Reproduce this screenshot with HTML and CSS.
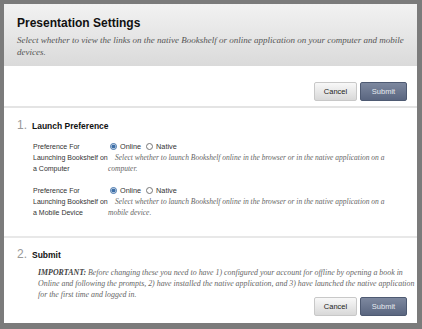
FILE: index.html
```html
<!DOCTYPE html>
<html lang="en">
<head>
  <meta charset="UTF-8" />
  <title>Presentation Settings</title>
  <link rel="stylesheet" href="styles.css">
</head>
<body>
  <div class="panel">
    <div class="page-header">
      <h1 class="page-title">Presentation Settings</h1>
      <p class="page-desc">Select whether to view the links on the native Bookshelf or online application on your computer and mobile devices.</p>
    </div>

    <div class="button-bar top-bar">
      <button class="btn btn-cancel">Cancel</button>
      <button class="btn btn-submit">Submit</button>
    </div>

    <div class="step">
      <h2 class="step-title"><span class="step-num">1.</span>Launch Preference</h2>
      <div class="field">
        <div class="field-label">Preference For Launching Bookshelf on a Computer</div>
        <div class="field-body">
          <div class="radios">
            <label class="radio"><input type="radio" name="computer" checked /> Online</label>
            <label class="radio"><input type="radio" name="computer" /> Native</label>
          </div>
          <p class="help">Select whether to launch Bookshelf online in the browser or in the native application on a computer.</p>
        </div>
      </div>
      <div class="field">
        <div class="field-label">Preference For Launching Bookshelf on a Mobile Device</div>
        <div class="field-body">
          <div class="radios">
            <label class="radio"><input type="radio" name="mobile" checked /> Online</label>
            <label class="radio"><input type="radio" name="mobile" /> Native</label>
          </div>
          <p class="help">Select whether to launch Bookshelf online in the browser or in the native application on a mobile device.</p>
        </div>
      </div>
    </div>

    <div class="step last-step">
      <h2 class="step-title"><span class="step-num">2.</span>Submit</h2>
      <p class="important"><b>IMPORTANT:</b> Before changing these you need to have 1) configured your account for offline by opening a book in Online and following the prompts, 2) have installed the native application, and 3) have launched the native application for the first time and logged in.</p>
      <div class="button-bar bottom-bar">
        <button class="btn btn-cancel">Cancel</button>
        <button class="btn btn-submit">Submit</button>
      </div>
    </div>
  </div>
</body>
</html>
```

FILE: styles.css
```css
* {
  box-sizing: border-box;
}

body {
  margin: 0;
  background-color: #7b7b7b;
  padding: 4px 5px 6px 4px;
  font-family: 'Liberation Sans', Arial, sans-serif;
  color: #222;
}

.panel {
  background-color: #fff;
  height: 319px;
  overflow: hidden;
}

.page-header {
  background: linear-gradient(#f2f2f2, #dadada);
  padding: 12px 13px 0;
  height: 62px;
}

.page-title {
  margin: 0;
  font-size: 12px;
  line-height: 14px;
  font-weight: 700;
  color: #111;
}

.page-desc {
  margin: 4px 0 0;
  font-family: 'Liberation Serif', Georgia, serif;
  font-style: italic;
  font-size: 9px;
  line-height: 12px;
  color: #555;
}

.button-bar {
  display: flex;
  justify-content: flex-end;
  gap: 3px;
  padding-right: 10px;
}

.top-bar {
  padding-top: 16px;
  height: 42px;
  border-bottom: 2px solid #e4e4e4;
}

.btn {
  height: 19px;
  border-radius: 2px;
  font-family: 'Liberation Sans', Arial, sans-serif;
  font-size: 7.5px;
  padding: 0;
  cursor: pointer;
}

.btn-cancel {
  width: 43px;
  color: #222;
  background: linear-gradient(#f8f8f8, #d8d8d8);
  border: 1px solid #c8c8c8;
}

.btn-submit {
  width: 47px;
  color: #e6e9ef;
  background: linear-gradient(#7d889f, #5a6680);
  border: 1px solid #4e5a72;
}

.step {
  padding: 10px 0 0 13px;
  height: 130px;
  border-bottom: 2px solid #e8e8e8;
}

.last-step {
  height: auto;
  padding-top: 9px;
  border-bottom: none;
}

.step-title {
  margin: 0 0 8px;
  font-size: 8.5px;
  line-height: 14px;
  font-weight: 700;
  color: #111;
  display: flex;
  align-items: baseline;
}

.last-step .step-title {
  margin-bottom: 5px;
}

.step-num {
  font-size: 12px;
  font-weight: 400;
  color: #999;
  width: 15px;
}

.field {
  display: flex;
  margin: 0 0 11px 16px;
}

.field-label {
  width: 77px;
  font-size: 7px;
  line-height: 11px;
  color: #333;
}

.field-body {
  flex: 1;
  padding-right: 15px;
}

.radios {
  display: flex;
  gap: 5px;
  font-size: 7.3px;
  line-height: 11px;
  color: #333;
}

.radio {
  display: flex;
  align-items: center;
  gap: 3px;
}

.radio input {
  margin: 0;
  width: 7px;
  height: 7px;
  accent-color: #3d6fa8;
}

.help {
  margin: 0 0 0 -2px;
  font-family: 'Liberation Serif', Georgia, serif;
  font-style: italic;
  font-size: 7.5px;
  line-height: 11px;
  color: #666;
  text-indent: 7px;
}

.important {
  margin: 0 0 0 21px;
  font-family: 'Liberation Serif', Georgia, serif;
  font-style: italic;
  font-size: 7.9px;
  line-height: 11px;
  color: #666;
}

.important b {
  color: #444;
}

.bottom-bar {
  margin-top: -3px;
}
```
